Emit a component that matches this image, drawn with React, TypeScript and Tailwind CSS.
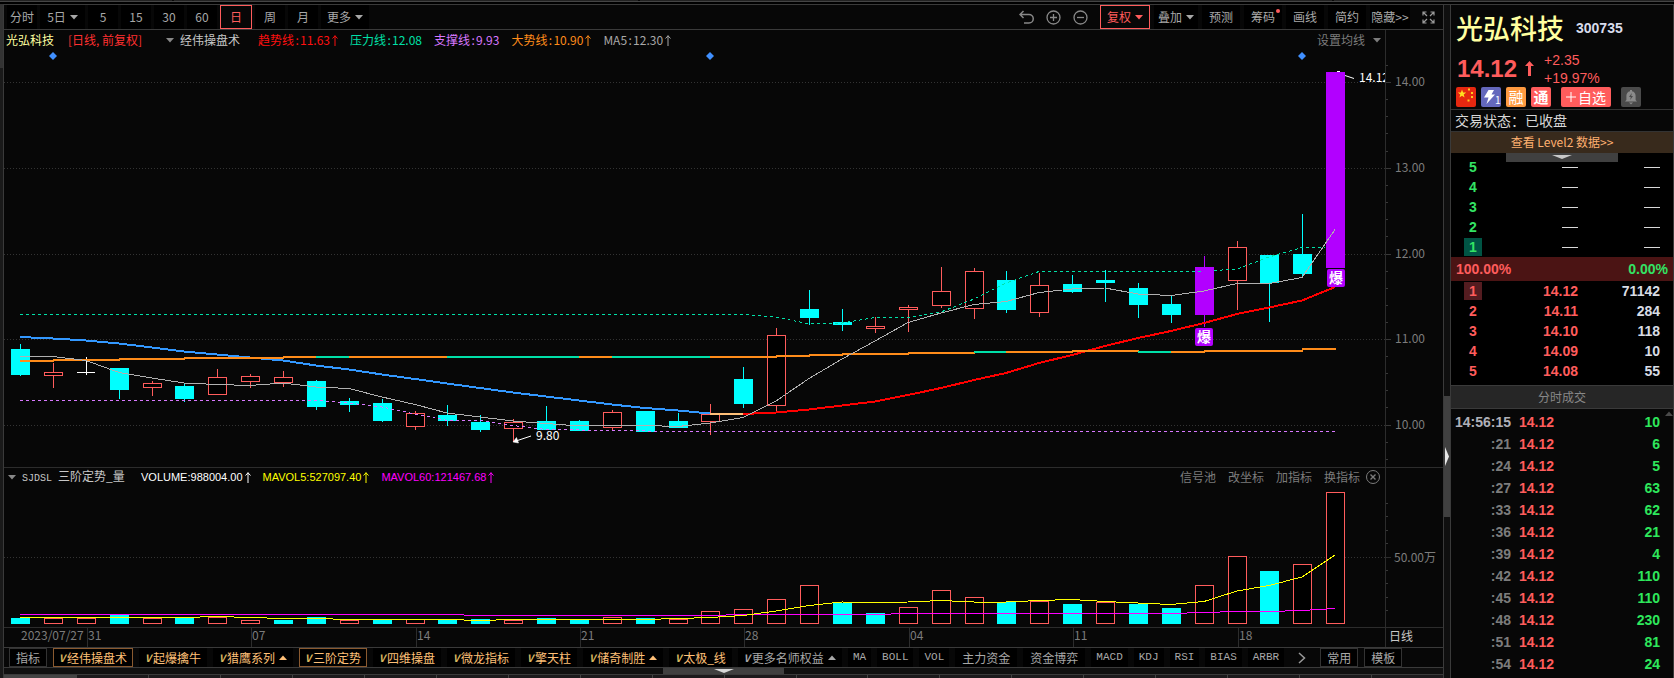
import React from 'react'

type Kind = 'up' | 'down' | 'flat' | 'burst'

// kind, open/close top, open/close bottom, high, low, volume top, volume colour
const candles: [Kind, number, number, number, number, number, 'up' | 'down'][] = [
  ['down', 349, 375, 344, 376, 618, 'down'],
  ['up', 372, 376, 363, 388, 618, 'up'],
  ['flat', 372, 373, 357, 375, 618, 'up'],
  ['down', 368, 390, 368, 399, 615, 'down'],
  ['up', 383, 388, 381, 396, 618, 'up'],
  ['down', 386, 399, 383, 402, 618, 'down'],
  ['up', 377, 395, 369, 395, 617, 'up'],
  ['up', 376, 382, 374, 388, 620, 'up'],
  ['up', 377, 383, 371, 387, 620, 'down'],
  ['down', 381, 407, 380, 410, 617, 'down'],
  ['down', 401, 405, 398, 412, 620, 'up'],
  ['down', 403, 421, 399, 422, 619, 'down'],
  ['up', 413, 427, 411, 430, 619, 'up'],
  ['down', 415, 421, 405, 426, 619, 'down'],
  ['down', 422, 430, 415, 432, 619, 'down'],
  ['up', 422, 429, 419, 442, 620, 'up'],
  ['down', 421, 430, 406, 430, 618, 'down'],
  ['down', 421, 431, 420, 431, 619, 'down'],
  ['up', 412, 428, 410, 430, 617, 'up'],
  ['down', 411, 432, 411, 432, 618, 'down'],
  ['down', 421, 428, 413, 428, 619, 'up'],
  ['up', 414, 422, 404, 435, 611, 'up'],
  ['down', 379, 404, 367, 408, 609, 'up'],
  ['up', 335, 406, 328, 411, 599, 'up'],
  ['down', 309, 318, 290, 325, 585, 'up'],
  ['down', 322, 325, 309, 331, 603, 'down'],
  ['up', 326, 329, 317, 333, 613, 'down'],
  ['up', 307, 310, 305, 332, 607, 'up'],
  ['up', 291, 306, 267, 308, 590, 'up'],
  ['up', 271, 309, 268, 319, 597, 'up'],
  ['down', 280, 310, 271, 313, 602, 'down'],
  ['up', 285, 313, 273, 317, 601, 'up'],
  ['down', 284, 292, 275, 293, 604, 'down'],
  ['down', 280, 283, 270, 302, 602, 'up'],
  ['down', 288, 305, 283, 318, 604, 'down'],
  ['down', 304, 315, 295, 323, 608, 'down'],
  ['burst', 267, 315, 256, 327, 585, 'up'],
  ['up', 247, 281, 241, 310, 556, 'up'],
  ['down', 255, 283, 255, 322, 571, 'down'],
  ['down', 254, 274, 214, 277, 564, 'up'],
  ['burst', 72, 268, 72, 268, 492, 'up'],
]

const cx = (i: number) => Math.round(20 + i * 32.88)
const line = (values: number[], from = 0) => values.map((y, i) => `${cx(from + i)},${y}`).join(' ')
const pairs = (values: [number, number][]) => values.map(([i, y]) => `${cx(i)},${y}`).join(' ')

const ma5 = [
  356.5, 356.5, 360.5, 372.5, 378, 383, 384.5, 385.5, 383, 387, 388.5, 397, 404.5, 413, 417, 421, 423.5, 426, 425.5, 425.5,
  426.5, 423, 417.5, 401, 378.5, 359, 341, 322.5, 313, 304.5, 301.5, 292.5, 289, 288, 294, 295.5, 291, 283.5, 283.5, 277.5, 229.5,
]
const trendDown = [
  337, 338.5, 340.5, 343.5, 347.5, 351.5, 354.5, 357.5, 360.5, 365.5, 369.5, 374.5, 379, 383.5, 388, 392.5, 396.5, 400.5,
  404.5, 408, 410.5, 413.5,
]
const trendUp = [414, 412.5, 409.5, 405.5, 401.5, 395, 388, 380, 373, 363, 355, 346, 338, 331, 323, 314, 307.5, 300.5, 287]
const pressure: [number, number][] = [
  [0, 314.5], [22, 314.5], [23, 317], [24, 324], [25, 323], [26, 317.5], [27, 317.5], [28, 312], [29, 299], [30, 283],
  [31, 271.5], [36, 271.5], [37, 269], [38, 257], [39, 247.5], [40, 247.5],
]
const support: [number, number][] = [
  [0, 400.5], [9, 400.5], [10, 403], [11, 407], [12, 414], [13, 420.5], [14, 420.5], [15, 425.5], [16, 429.5],
  [18, 430.5], [20, 431.5], [40, 431.5],
]
// start, end, y, colour
const bigTrend: [number, number, number, string][] = [
  [0, 1, 361, '#ff8c1a'], [1, 3, 360, '#ff8c1a'], [3, 5, 359, '#ff8c1a'], [5, 8, 358, '#ff8c1a'], [8, 9, 357, '#ff8c1a'],
  [9, 10, 357, '#00e0a8'], [10, 13, 357, '#ff8c1a'], [13, 17, 357, '#00e0a8'], [17, 18, 357, '#ff8c1a'],
  [18, 21, 357, '#00e0a8'], [21, 23, 357, '#ff8c1a'], [23, 24, 356, '#ff8c1a'], [24, 25, 355, '#ff8c1a'],
  [25, 27, 354, '#ff8c1a'], [27, 29, 353, '#ff8c1a'], [29, 30, 352, '#00e0a8'], [30, 32, 352, '#ff8c1a'],
  [32, 34, 351, '#ff8c1a'], [34, 35, 352, '#00e0a8'], [35, 36, 352, '#ff8c1a'], [36, 39, 351, '#ff8c1a'],
  [39, 40, 349, '#ff8c1a'],
]
const mavol5 = [
  617.5, 617.5, 617.5, 617.5, 617.5, 617.5, 616.5, 617.5, 618.5, 618.5, 619.5, 619.5, 619.5, 619.5, 620.5, 619.5, 619.5, 619.5,
  619.5, 619.5, 618.5, 617.5, 615.5, 611, 605.5, 602, 602.5, 602, 600.5, 602, 602, 600.5, 599.5, 601.5, 603, 604.5, 601.5,
  591, 585.5, 577, 555,
]
const mavol60: [number, number][] = [
  [0, 614.5], [13, 614.5], [14, 615.5], [21, 615.5], [22, 614.5], [26, 614.5], [27, 613.5], [35, 613.5], [36, 612.5],
  [37, 611.5], [38, 611.5], [39, 610.5], [40, 608.5],
]

const prices: [string, number][] = [['14.00', 82], ['13.00', 168], ['12.00', 254], ['11.00', 339], ['10.00', 425]]
const minorPriceTicks = [65, 99, 116, 133, 151, 185, 202, 219, 236, 271, 288, 305, 322, 356, 373, 390, 407, 442, 459]
const minorVolumeTicks = [503, 516, 530, 543, 570, 583, 597, 610]
const dates: [string, number][] = [
  ['31', 87], ['07', 251], ['14', 416], ['21', 580], ['28', 744], ['04', 909], ['11', 1073], ['18', 1238],
]

const legend = [
  { name: '趋势线', value: '11.63', up: true, color: 'text-[#ff1010]' },
  { name: '压力线', value: '12.08', up: false, color: 'text-[#00e0a8]' },
  { name: '支撑线', value: '9.93', up: false, color: 'text-[#d878ff]' },
  { name: '大势线', value: '10.90', up: true, color: 'text-[#ff8c1a]' },
  { name: 'MA5', value: '12.30', up: true, color: 'text-[#a8a8a8]' },
]

const volumeLegend = [
  { name: 'VOLUME', value: '988004.00', color: 'text-white' },
  { name: 'MAVOL5', value: '527097.40', color: 'text-[#ffff00]' },
  { name: 'MAVOL60', value: '121467.68', color: 'text-[#ff00ff]' },
]

const periods = [
  { label: '分时', width: 'w-[30px]' },
  { label: '5日', width: 'w-[45px]', menu: true },
  { label: '5', width: 'w-[30px]' },
  { label: '15', width: 'w-[30px]' },
  { label: '30', width: 'w-[30px]' },
  { label: '60', width: 'w-[30px]' },
  { label: '日', width: 'w-[32px]', active: true },
  { label: '周', width: 'w-[30px]' },
  { label: '月', width: 'w-[30px]' },
  { label: '更多', width: 'w-[48px]', menu: true },
]

const masterTabs = [
  { label: '经伟操盘术', active: true },
  { label: '起爆擒牛' },
  { label: '猎鹰系列', menu: true },
  { label: '三阶定势', active: true },
  { label: '四维操盘' },
  { label: '微龙指标' },
  { label: '擎天柱' },
  { label: '储奇制胜', menu: true },
  { label: '太极_线' },
]

const plainTabs = ['MA', 'BOLL', 'VOL', '主力资金', '资金博弈', 'MACD', 'KDJ', 'RSI', 'BIAS', 'ARBR']

const bids = [['1', '14.12', '71142'], ['2', '14.11', '284'], ['3', '14.10', '118'], ['4', '14.09', '10'], ['5', '14.08', '55']]

const trades = [
  ['14:56:15', '10'], [':21', '6'], [':24', '5'], [':27', '63'], [':33', '62'], [':36', '21'],
  [':39', '4'], [':42', '110'], [':45', '110'], [':48', '230'], [':51', '81'], [':54', '24'],
]

function Caret({ up = false, className = '' }: { up?: boolean; className?: string }) {
  return (
    <svg width="8" height="5" viewBox="0 0 8 5" className={`shrink-0 ${className}`} aria-hidden>
      <path d={up ? 'M0 5 4 0.5 8 5z' : 'M0 0 4 4.5 8 0z'} fill="currentColor" />
    </svg>
  )
}

function UpArrow() {
  return (
    <svg width="6" height="11" viewBox="0 0 6 11" className="ml-0.5 shrink-0" aria-hidden>
      <path d="M3 0.5V11M0.5 3.5 3 0.8 5.5 3.5" fill="none" stroke="currentColor" />
    </svg>
  )
}

function Candle({ index }: { index: number }) {
  const [kind, top, bottom, high, low] = candles[index]
  const x = cx(index)
  if (kind === 'flat') {
    return <path d={`M${x - 9} ${top + 0.5}h18M${x + 0.5} ${high}V${low}`} stroke="#fff" />
  }
  if (kind === 'up') {
    return (
      <g stroke="#ff5c5c" fill="#000">
        <path d={`M${x + 0.5} ${high}V${top}M${x + 0.5} ${bottom}V${low}`} />
        <rect x={x - 8.5} y={top + 0.5} width="18" height={bottom - top - 1} />
      </g>
    )
  }
  const color = kind === 'burst' ? '#b200ff' : '#00ffff'
  return (
    <g fill={color}>
      <rect x={x} y={high} width="1" height={low - high} />
      <rect x={x - 9} y={top} width="19" height={bottom - top} />
    </g>
  )
}

function Burst({ x, y }: { x: number; y: number }) {
  return (
    <g>
      <rect x={x} y={y} width="18" height="18" rx="2" fill="#b200ff" />
      <text x={x + 9} y={y + 14} textAnchor="middle" fontSize="14" fontWeight="700" fill="#fff">爆</text>
    </g>
  )
}

function PriceChart() {
  return (
    <svg viewBox="4 50 1439 417" className="block h-auto w-full" role="img" aria-label="日线 K线图">
      <defs>
        <clipPath id="plot">
          <rect x="4" y="50" width="1381" height="417" />
        </clipPath>
      </defs>
      {prices.map(([label, y]) => (
        <g key={label}>
          <path d={`M4 ${y + 0.5}H1385`} stroke="#333" strokeDasharray="1 2" />
          <path d={`M1385 ${y + 0.5}h6`} stroke="#383838" />
          <text x="1395" y={y + 4} fontSize="12" fill="#7c7c7c">{label}</text>
        </g>
      ))}
      {minorPriceTicks.map((y) => (
        <path key={y} d={`M1386 ${y + 0.5}h2`} stroke="#383838" />
      ))}
      <path d="M1385.5 50V467" stroke="#2c2c2c" />
      {[53, 710, 1302].map((x) => (
        <path key={x} d={`M${x} 52l4 4-4 4-4-4z`} fill="#4090ff" />
      ))}
      <g clipPath="url(#plot)" shapeRendering="crispEdges" fill="none">
        {candles.map((_, i) => <Candle key={i} index={i} />)}
        <polyline points={pairs(pressure.slice(0, 12))} stroke="#00e0a8" strokeDasharray="3 3" />
        <polyline points={`1214,270.5 ${pairs(pressure.slice(12, 15))} 1325,247.5`} stroke="#00e0a8" strokeDasharray="3 3" />
        <polyline points={pairs(support)} stroke="#d878ff" strokeDasharray="3 3" />
        <polyline points={line(trendDown)} stroke="#3398ff" strokeWidth="2" />
        <polyline points={line([414, 414], 21)} stroke="#ffc078" strokeWidth="2" />
        <polyline points={line(trendUp, 22)} stroke="#f00" strokeWidth="2" />
        {bigTrend.map(([a, b, y, color]) => (
          <path key={a} d={`M${cx(a)} ${y}H${cx(b) + 1}`} stroke={color} strokeWidth="2" />
        ))}
        <polyline points={line(ma5)} stroke="#b0b0b0" />
      </g>
      <Burst x={1195} y={328} />
      <Burst x={1327} y={269} />
      <g stroke="#fff" fill="#fff" clipPath="url(#plot)">
        <path d="M1345 75.5 1354 78.5M1337 71.5h3" fill="none" />
        <path d="M531 436 516 441" fill="none" />
        <path d="M513 442l3.500-4.500 2 5.500z" strokeWidth="0.500" />
        <g stroke="none" fontSize="12">
          <text x="1359" y="82">14.12</text>
          <text x="536" y="440">9.80</text>
        </g>
      </g>
    </svg>
  )
}

function VolumeChart() {
  return (
    <svg viewBox="4 486 1439 161" className="block h-auto w-full" role="img" aria-label="成交量">
      <path d="M4 557.5H1385" stroke="#333" strokeDasharray="1 2" />
      <path d="M1385 557.5h6M4 627.5H1443M1385.5 486V647" stroke="#2c2c2c" />
      {minorVolumeTicks.map((y) => (
        <path key={y} d={`M1386 ${y + 0.5}h2`} stroke="#383838" />
      ))}
      <g shapeRendering="crispEdges" fill="none">
        {candles.map(([, , , , , top, color], i) =>
          color === 'up' ? (
            <rect key={i} x={cx(i) - 8.5} y={top + 0.5} width="18" height={623 - top} stroke="#ff5c5c" fill="#000" />
          ) : (
            <rect key={i} x={cx(i) - 9} y={top} width="19" height={624 - top} fill="#00ffff" />
          ),
        )}
        <polyline points={pairs(mavol60)} stroke="#f0f" />
        <polyline points={line(mavol5)} stroke="#ff0" />
      </g>
      <g fontSize="12" fill="#7c7c7c">
        <text x="1394" y="562">50.00万</text>
        <text x="21" y="640">2023/07/27</text>
        {dates.map(([label, x]) => (
          <g key={label}>
            <path d={`M${x + 0.5} 628V647`} stroke="#2c2c2c" />
            <text x={x + 1} y="640">{label}</text>
          </g>
        ))}
        <text x="1389" y="641" fill="#c8c8c8">日线</text>
      </g>
    </svg>
  )
}

function Toolbar() {
  const tool = 'relative flex h-6 items-center justify-center whitespace-nowrap bg-black'
  return (
    <div className="flex h-[25px] items-center border-b border-[#3a3a3a] pl-[3px] text-[#a8a8a8]">
      <div className="flex gap-[3px]">
        {periods.map(({ label, width, menu, active }) => (
          <button
            key={label}
            className={`flex h-6 items-center justify-center gap-1 ${width} ${
              active ? 'border border-[#ff5c5c] text-[#ff5c5c]' : 'bg-black'
            }`}
          >
            {label}
            {menu && <Caret />}
          </button>
        ))}
      </div>
      <div className="ml-auto flex items-center gap-1">
        <div className="mr-2 flex items-center gap-3 text-[#888]">
          <button aria-label="撤销">
            <svg width="15" height="15" viewBox="0 0 15 15" fill="none" stroke="currentColor" strokeWidth="1.500">
              <path d="M1 4.500h9a4 4 0 0 1 0 8.500H5M4.500 1 1 4.500 4.500 8" />
            </svg>
          </button>
          <button aria-label="放大">
            <svg width="15" height="15" viewBox="0 0 15 15" fill="none" stroke="currentColor" strokeWidth="1.300">
              <circle cx="7.500" cy="7.500" r="6.500" />
              <path d="M4 7.500h7M7.500 4v7" />
            </svg>
          </button>
          <button aria-label="缩小">
            <svg width="15" height="15" viewBox="0 0 15 15" fill="none" stroke="currentColor" strokeWidth="1.300">
              <circle cx="7.500" cy="7.500" r="6.500" />
              <path d="M4 7.500h7" />
            </svg>
          </button>
        </div>
        <button className="flex h-6 w-[50px] items-center justify-center gap-1 border border-[#ff5c5c] text-[#ff5c5c]">
          复权
          <Caret />
        </button>
        <button className={`${tool} w-11 gap-1`}>
          叠加
          <Caret />
        </button>
        <button className={`${tool} w-[38px]`}>预测</button>
        <button className={`${tool} w-[38px]`}>
          筹码
          <span className="absolute top-1 right-0.5 size-1 rounded-full bg-[#ff5c5c]" />
        </button>
        <button className={`${tool} w-[38px]`}>画线</button>
        <button className={`${tool} w-[38px]`}>简约</button>
        <button className={`${tool} w-10`}>隐藏&gt;&gt;</button>
        <button aria-label="全屏" className="mx-2 text-[#999]">
          <svg width="13" height="13" viewBox="0 0 13 13" fill="none" stroke="currentColor" strokeWidth="1.200">
            <path d="M1 4.500V1h3.500M1 1l4 4M8.500 1H12v3.500M12 1 8 5M1 8.500V12h3.500M1 12l4-4M12 8.500V12H8.500M12 12 8 8" />
          </svg>
        </button>
      </div>
    </div>
  )
}

function IndicatorTabs() {
  const tab = 'flex h-[19px] shrink-0 items-center whitespace-nowrap border bg-black'
  return (
    <nav className="flex items-center gap-1.5 overflow-hidden border-y border-[#3a3a3a] pl-[5px]">
      <button className={`${tab} border-[#333] px-1.5 text-[#a8a8a8]`}>指标</button>
      {masterTabs.map(({ label, active, menu }) => (
        <button
          key={label}
          className={`${tab} px-[5px] text-[#ffc078] ${active ? 'border-[#8a5a30]' : 'border-transparent'}`}
        >
          <span className="w-2 text-left text-[10px] font-bold text-[#d8b860] italic">V</span>
          {label}
          {menu && <Caret up className="ml-1" />}
        </button>
      ))}
      <button className={`${tab} border-transparent px-[5px] text-[#a8a8a8]`}>
        <span className="w-2 text-left text-[10px] font-bold italic">V</span>
        更多名师权益
        <Caret up className="ml-1" />
      </button>
      {plainTabs.map((label) => (
        <button
          key={label}
          className={`${tab} border-transparent text-[#a8a8a8] ${
            /[A-Z]/.test(label) ? "px-1 font-['Liberation_Mono',monospace] text-[11px]" : 'px-1.5'
          }`}
        >
          {label}
        </button>
      ))}
      <button aria-label="更多指标" className="mx-2 text-[#999]">
        <svg width="8" height="12" viewBox="0 0 8 12" fill="none" stroke="currentColor" strokeWidth="1.500">
          <path d="M1 1l5.500 5L1 11" />
        </svg>
      </button>
      <button className={`${tab} border-[#333] px-1.5 text-[#a8a8a8]`}>常用</button>
      <button className={`${tab} border-[#333] px-1.5 text-[#a8a8a8]`}>模板</button>
    </nav>
  )
}

function QuoteHeader() {
  return (
    <header>
      <div className="flex h-[45px] items-center gap-3 pl-[5px]">
        <h1 className="text-[27px] leading-none font-medium text-[#ffffa0]">光弘科技</h1>
        <span className="font-['Liberation_Sans',sans-serif] text-sm font-bold text-[#d8dcec]">300735</span>
      </div>
      <div className="flex h-[37px] items-center pl-1.5 font-['Liberation_Sans',sans-serif] text-[#ff5c5c]">
        <span className="text-2xl font-bold">14.12</span>
        <svg width="9" height="15" viewBox="0 0 9 15" className="ml-2" aria-hidden>
          <path d="M4.500 0 9 5H6v10H3V5H0z" fill="currentColor" />
        </svg>
        <div className="ml-2.5 text-sm leading-[18px]">
          <p>+2.35</p>
          <p>+19.97%</p>
        </div>
      </div>
      <div className="flex h-[23px] gap-[5px] border-b border-[#333] pl-[5px] text-white">
        <svg width="20" height="20" viewBox="0 0 20 20" aria-label="中国">
          <rect width="20" height="20" rx="2" fill="#e62810" />
          <path d="M6 2.500l1.100 3 3.100.1-2.500 1.900.9 3L6 8.700l-2.600 1.800.9-3L1.800 5.600l3.100-.1z" fill="#ffe020" />
          <path d="M12 1.500h2v2h-2zM15 5h2v2h-2zM15 9h2v2h-2zM11.500 12.500h2v2h-2z" fill="#ffc820" />
        </svg>
        <svg width="20" height="20" viewBox="0 0 20 20" aria-label="闪电">
          <rect width="20" height="20" rx="2" fill="#6468bc" />
          <path d="M7.500 3H13l-2.500 4.500H14L5.500 17l2-6.500H3z" fill="#fff" />
          <text x="14" y="17" fontSize="10" fill="#fff">1</text>
        </svg>
        <span className="flex size-5 items-center justify-center rounded-xs bg-[#ff9a40] text-[15px]">融</span>
        <span className="flex size-5 items-center justify-center rounded-xs bg-[#ff5c5c] text-[15px] font-bold">通</span>
        <button className="ml-[5px] flex h-5 w-[50px] items-center justify-center rounded-xs bg-[#ff5c5c] text-sm">
          <svg width="10" height="10" viewBox="0 0 10 10" className="mr-0.5" aria-hidden>
            <path d="M5 0v10M0 5h10" stroke="currentColor" />
          </svg>
          自选
        </button>
        <button aria-label="提醒" className="ml-[5px] size-5">
          <svg width="20" height="20" viewBox="0 0 20 20">
            <rect width="20" height="20" rx="2" fill="#4a4a4a" />
            <path d="M9 3h2v1.200c2.500.5 3.600 2.400 3.600 4.600V13l1.400 1.500H4L5.400 13V8.800C5.400 6.600 6.500 4.700 9 4.200zM8 15.500h4L10 17.500z" fill="#8a8a8a" />
            <path d="M10.800 6 8 10h1.800l-.6 3L12 9h-1.800z" fill="#4a4a4a" />
          </svg>
        </button>
      </div>
      <p className="h-[22px] border-b border-[#333] pl-1 text-sm leading-[21px] text-[#d8d8d8]">交易状态：已收盘</p>
      <a href="#level2" className="block h-[21px] bg-[#382a1c] text-center leading-5 text-[#ffb070]">
        查看 Level2 数据&gt;&gt;
      </a>
    </header>
  )
}

function OrderBook() {
  return (
    <section className="relative bg-black pt-1 pb-1 font-['Liberation_Sans',sans-serif] text-sm font-bold">
      <div className="absolute top-0 left-[55px] flex h-[9px] w-28 justify-center bg-[#404040] pt-0.5 text-[#c8c8c8]">
        <svg width="20" height="4" viewBox="0 0 20 4" aria-hidden>
          <path d="M0 0h20L10 4z" fill="currentColor" />
        </svg>
      </div>
      <table className="w-full table-fixed border-collapse text-[#33e364]">
        <tbody>
          {['5', '4', '3', '2', '1'].map((level) => (
            <tr key={level} className="h-5">
              <td className="w-11 p-0 text-center">
                <span className={`inline-block size-[18px] leading-[18px] ${level === '1' ? 'bg-[#005444]' : ''}`}>{level}</span>
              </td>
              <td className="w-[83px] p-0">
                <span className="ml-auto block h-px w-4 bg-[#d8d8d8]" />
              </td>
              <td className="py-0 pr-[13px] pl-0">
                <span className="ml-auto block h-px w-4 bg-[#d8d8d8]" />
              </td>
            </tr>
          ))}
        </tbody>
      </table>
      <div className="flex h-6 items-center justify-between bg-[#4b1414] px-[5px]">
        <span className="text-[#ff5c5c]">100.00%</span>
        <span className="text-[#33e364]">0.00%</span>
      </div>
      <table className="w-full table-fixed border-collapse text-[#ff5c5c]">
        <tbody>
          {bids.map(([level, price, amount]) => (
            <tr key={level} className="h-5">
              <td className="w-11 p-0 text-center">
                <span className={`inline-block size-[18px] leading-[18px] ${level === '1' ? 'bg-[#541c20]' : ''}`}>{level}</span>
              </td>
              <td className="w-[83px] p-0 text-right">{price}</td>
              <td className="py-0 pr-[13px] pl-0 text-right text-[#d8dce4]">{amount}</td>
            </tr>
          ))}
        </tbody>
      </table>
    </section>
  )
}

function Trades() {
  return (
    <section className="relative">
      <h2 className="h-6 border-y border-[#3a3a3a] bg-[#262626] text-center leading-[22px] text-[#888]">分时成交</h2>
      <Caret up className="absolute top-[26px] right-0 text-[#4a4a4a]" />
      <table className="mt-0.5 w-full table-fixed border-collapse font-['Liberation_Sans',sans-serif] text-sm font-bold">
        <tbody>
          {trades.map(([time, amount], i) => (
            <tr key={time} className="h-[22px]">
              <td className={`w-[60px] p-0 text-right ${i === 0 ? 'text-[#b0b0b8]' : 'text-[#7c7c7c]'}`}>{time}</td>
              <td className="w-20 py-0 pr-0 pl-2 text-[#ff5c5c]">14.12</td>
              <td className="py-0 pr-[13px] pl-0 text-right text-[#2ee85c]">{amount}</td>
            </tr>
          ))}
        </tbody>
      </table>
    </section>
  )
}

export default function App() {
  return (
    <div className="flex min-h-screen flex-col bg-[#070707] font-['Noto_Sans_CJK_SC','Liberation_Sans',sans-serif] text-xs">
      <div className="flex h-0.5 gap-0.5 border-b border-[#444]">
        <div className="w-[172px] bg-[#222]" />
        <div className="w-[464px] bg-[#222]" />
        <div className="w-[692px] bg-[#222]" />
        <div className="flex-1 bg-[#222]" />
      </div>
      <div className="h-0.5 bg-black" />

      <div className="flex flex-1">
        <div className="w-1 shrink-0 border-r border-[#3a3a3a] bg-[#1a1a1a]">
          <div className="h-16 bg-[#333]" />
        </div>

        <main className="min-w-0 flex-1 border-t border-r border-[#3a3a3a]">
          <Toolbar />
          <div className="flex h-5 items-center border-[#2c2c2c] whitespace-nowrap">
            <div className="flex h-5 min-w-0 flex-1 items-center border-r border-[#2c2c2c] pl-0.5">
              <span className="text-[#ffffa0]">光弘科技</span>
              <span className="ml-3.5 w-[98px] text-[#ff3030]">[日线, 前复权]</span>
              <Caret className="text-[#888]" />
              <h2 className="mr-[18px] ml-1.5 text-[#c8c8c8]">经伟操盘术</h2>
              <div className="flex gap-3">
                {legend.map(({ name, value, up, color }) => (
                  <span key={name} className={`flex items-center ${color}`}>
                    {name}
                    <span className="w-1.5 text-center">:</span>
                    {value}
                    {up && <UpArrow />}
                  </span>
                ))}
              </div>
              <button className="mr-1 ml-auto flex items-center gap-2 text-[#7c7c7c]">
                设置均线
                <Caret />
              </button>
            </div>
            <div className="w-[57px]" />
          </div>
          <PriceChart />

          <div className="flex border-t border-[#2c2c2c] whitespace-nowrap">
            <div className="flex h-[18px] min-w-0 flex-1 items-center border-r border-[#2c2c2c] pl-1">
              <Caret className="text-[#888]" />
              <h2 className="ml-1.5 w-[119px] text-[#c8c8c8]">
                <span className="mr-1.5 font-['Liberation_Mono',monospace] text-[10px]">SJDSL</span>
                三阶定势_量
              </h2>
              <div className="flex gap-3">
                {volumeLegend.map(({ name, value, color }) => (
                  <span key={name} className={`flex items-center font-['Liberation_Sans',sans-serif] text-[11px] ${color}`}>
                    {name}:{value}
                    <UpArrow />
                  </span>
                ))}
              </div>
              <div className="mr-[5px] ml-auto flex items-center gap-3 text-[#7c7c7c]">
                <button>信号池</button>
                <button>改坐标</button>
                <button>加指标</button>
                <button>换指标</button>
                <button aria-label="关闭" className="-ml-1.5">
                  <svg width="14" height="14" viewBox="0 0 14 14" fill="none" stroke="currentColor">
                    <circle cx="7" cy="7" r="6.500" />
                    <path d="M4.500 4.500l5 5M9.500 4.500l-5 5" strokeWidth="1.400" />
                  </svg>
                </button>
              </div>
            </div>
            <div className="w-[57px]" />
          </div>
          <VolumeChart />
          <IndicatorTabs />
          <div className="flex h-[7px] justify-center border-b border-[#3a3a3a] bg-[#101010]">
            <div className="flex h-1.5 w-[121px] justify-center bg-[#404040] pt-px text-[#d8d8d8]">
              <svg width="20" height="4" viewBox="0 0 20 4" aria-hidden>
                <path d="M0 0h20L10 4z" fill="currentColor" />
              </svg>
            </div>
          </div>
          <div className="flex h-[3px] gap-px bg-[#444]">
            <div className="w-[72px] bg-[#444]" />
            {Array.from({ length: 19 }, (_, i) => (
              <div key={i} className="flex-1 bg-[#1c1a1c]" />
            ))}
          </div>
        </main>

        <div className="flex w-1.5 shrink-0 flex-col border-t border-[#3a3a3a] bg-[#0f0f0f] pt-[391px]">
          <div className="flex h-[121px] items-center bg-[#404040] pl-px">
            <svg width="4" height="19" viewBox="0 0 4 19" aria-hidden>
              <path d="M0 0v19l4-9.500z" fill="#e8e8e8" />
            </svg>
          </div>
        </div>

        <aside className="w-56 shrink-0 border border-b-0 border-[#3a3a3a]">
          <QuoteHeader />
          <OrderBook />
          <Trades />
        </aside>
      </div>
    </div>
  )
}
